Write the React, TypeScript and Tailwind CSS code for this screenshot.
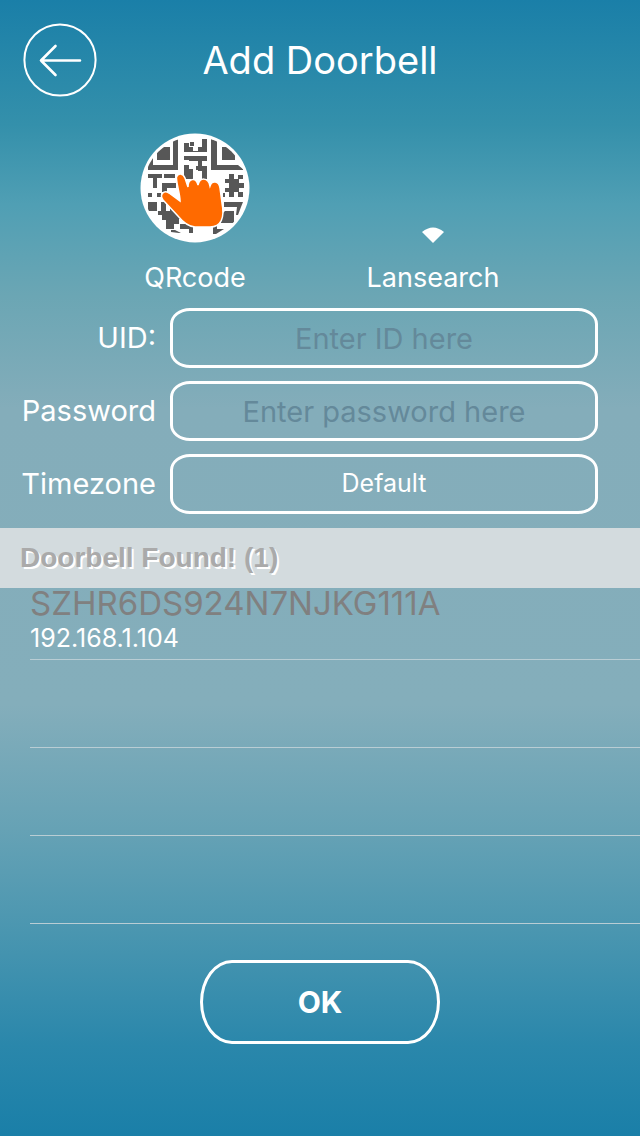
import React, { useState } from 'react';

interface Doorbell {
  uid: string;
  ip: string;
}

const doorbells: Doorbell[] = [{ uid: 'SZHR6DS924N7NJKG111A', ip: '192.168.1.104' }];

const fieldClass =
  'h-[60px] w-full min-w-0 border-[3px] border-white rounded-[20px/16px] bg-transparent text-center text-white outline-none placeholder:text-[#64899a] placeholder:opacity-100';

const QrIcon: React.FC = () => (
  <svg viewBox="0 0 110 110" className="size-[110px]" aria-hidden="true">
    <defs>
      <clipPath id="disc">
        <circle cx="55" cy="55" r="51.5" />
      </clipPath>
    </defs>
    <circle cx="55" cy="55" r="54.5" fill="#fff" />
    <g clipPath="url(#disc)" fill="#575757">
      {/* finder patterns */}
      <path d="M38 6V37H8V31L13 23V32H33V8Z" />
      <path d="M21 14H30V27H17V19Z" />
      <path d="M71 6L77 8V32H98L104 37H71Z" />
      <path d="M82 14H90L95 20V27H82Z" />
      <path d="M84 69H103L101 74H84Z M81 82L85 78H94V90H81Z M97 74H101L98 82H96Z M73 92H77V96H84L76 101H73Z" />
      {/* modules */}
      <path d="M44 10H49V14H53V18H58V14H62V6H67V19H44Z M44 23H67V28H62V33H67V46H62V38H58V28H49V27H44Z M44 32H49V36H53V46H44Z M56 33H61V37H56Z M50 9H54V13H50Z" />
      <path d="M8 41H22V45H17V55H13V45H8Z M24 41H35V45H24Z M22 50H36V55H27V59H22Z M8 60H12V64H8Z M17 60H21V64H17Z M8 69H17V78H8Z M21 69H26V78H30V82H34V87H30V92H26V87H22V82H18V78H21Z" />
      <path d="M30 73L44 86H39V91H34V96H26V92H30Z M31 97H35L41 100H39L31 99Z M44 91H53V100H49V96H44Z M40 91H44V96H40Z" />
      <path d="M89 41H94V46H98V42H103V46H99V50H104V55H99V59H103V64H98V59H94V64H89V59H85V55H89V50H85V46H89Z M83 60H85V64H83Z" />
    </g>
    <path
      d="M23 67C19 61 24 57 29 60L40 68C40 60 36 50 36.500 44C38 39.500 43 40 45 45L48 54C48 45 56 44 58 52C60 44 68 44 70 53C72 47 79 48 80 55L82 70C85 85 81 94 70 94H55C48 94 42 88 37 82Z"
      fill="#ff6a00"
      stroke="#fff"
      strokeWidth="1.5"
    />
  </svg>
);

const App: React.FC = () => {
  const [uid, setUid] = useState('');
  const [password, setPassword] = useState('');

  return (
    <main className="min-h-screen flex flex-col overflow-hidden bg-[linear-gradient(to_bottom,#1a7fa8_0%,#3490ab_11%,#509fb4_18%,#6ba6b4_26%,#84adba_36%,#84aebb_62%,#66a2b5_73%,#4a96b0_82%,#2a87ab_92%,#1a7fa8_100%)] font-['Inter',sans-serif] text-white">
      {/* Header */}
      <header className="grid grid-cols-[74px_1fr_74px] items-center px-[23px] h-[120px]">
        <button type="button" aria-label="Back">
          <svg viewBox="0 0 74 74" className="size-[74px]" fill="none" stroke="#fff">
            <circle cx="37" cy="37" r="35.6" strokeWidth="2" />
            <path d="M57 37.500H18M32.500 23L18 37.500L32.500 52" strokeWidth="2.600" strokeLinecap="round" strokeLinejoin="round" />
          </svg>
        </button>
        <h1 className="text-center text-[38px] font-normal">Add Doorbell</h1>
      </header>

      {/* Ways to find a doorbell */}
      <div className="grid grid-cols-2 pl-[76px] pr-[88px] pt-[13px] text-[27px] leading-10">
        <button type="button" className="flex flex-col items-center justify-end gap-[15px]">
          <QrIcon />
          QRcode
        </button>
        <button type="button" className="flex flex-col items-center justify-end gap-[15px]">
          <svg viewBox="0 0 24 16" className="w-6 h-4" fill="#fff" aria-hidden="true">
            <path d="M1 5Q12 -4 23 5L12 16Z" />
          </svg>
          Lansearch
        </button>
      </div>

      {/* Form */}
      <form className="grid grid-cols-[156px_1fr] items-center gap-x-[14px] gap-y-[13px] pt-[10px] pb-[14px] pr-[42px] text-[29px]">
        <label htmlFor="uid" className="text-right">UID:</label>
        <input id="uid" className={fieldClass} value={uid} onChange={(e) => setUid(e.target.value)} placeholder="Enter ID here" />
        <label htmlFor="password" className="text-right">Password</label>
        <input
          id="password"
          type="password"
          className={fieldClass}
          value={password}
          onChange={(e) => setPassword(e.target.value)}
          placeholder="Enter password here"
        />
        <label htmlFor="timezone" className="text-right">Timezone</label>
        <select id="timezone" className={`${fieldClass} appearance-none text-[25px] [text-align-last:center]`}>
          <option>Default</option>
        </select>
      </form>

      {/* Results */}
      <section>
        <h2 className="flex items-center h-[60px] px-5 bg-[#d3dbde] text-[#aaa] text-[28px] font-bold font-['Liberation_Sans',Arial,sans-serif] [text-shadow:2px_2px_0_#fff]">
          Doorbell Found! ({doorbells.length})
        </h2>
        <ul className="pl-[30px]">
          {doorbells.map((item) => (
            <li key={item.uid} className="h-[72px] border-b border-[#b9cdd4]">
              <p className="text-[33px] leading-[30px] text-[#808080]">{item.uid}</p>
              <p className="text-[25px] leading-10">{item.ip}</p>
            </li>
          ))}
          <li className="h-[88px] border-b border-[#b9cdd4]" />
          <li className="h-[88px] border-b border-[#b9cdd4]" />
          <li className="h-[88px] border-b border-[#b9cdd4]" />
        </ul>
      </section>

      <button type="button" className="self-center mt-9 w-[240px] h-[84px] border-[3px] border-white rounded-[32px/42px] text-[30px] font-bold">
        OK
      </button>
    </main>
  );
};

export default App;
